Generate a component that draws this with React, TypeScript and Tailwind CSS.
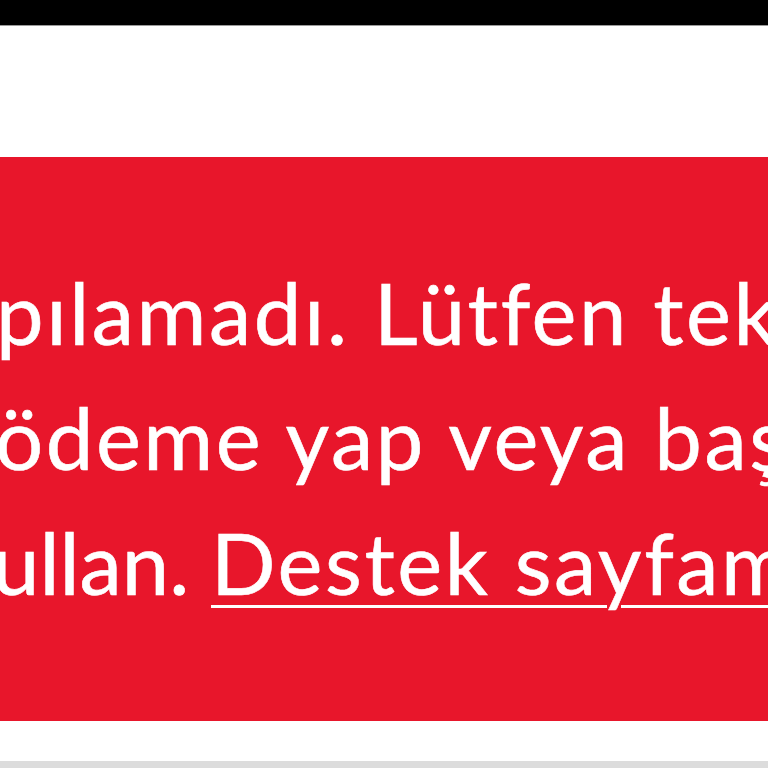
export default function App() {
  return (
    <div className="flex h-[768px] w-[768px] flex-col overflow-hidden bg-white font-['Lato','Noto_Sans',sans-serif]">
      <div className="h-[26px] shrink-0 border-b border-[#9a9a9a] bg-black" />
      <div className="h-[131px] shrink-0 bg-white" />
      <div className="flex h-[564px] shrink-0 flex-col bg-[#e8162b] pt-[93px] text-[85px] leading-[125px] tracking-[0.03em] text-white [-webkit-text-stroke:0.6px_white]">
        <p className="-ml-[4px] whitespace-nowrap">pılamadı. Lütfen tekrar</p>
        <p className="-ml-[5px] whitespace-nowrap">ödeme yap veya başka</p>
        <p className="-ml-[8px] whitespace-nowrap">
          <span className="tracking-[0em]">ullan. </span>
          <a className="underline decoration-[3px] underline-offset-[10px]" href="#">
            Destek sayfamıza
          </a>
        </p>
      </div>
      <div className="h-[40px] shrink-0 bg-white" />
      <div className="flex-1 bg-[#dcdcdc]" />
    </div>
  );
}
